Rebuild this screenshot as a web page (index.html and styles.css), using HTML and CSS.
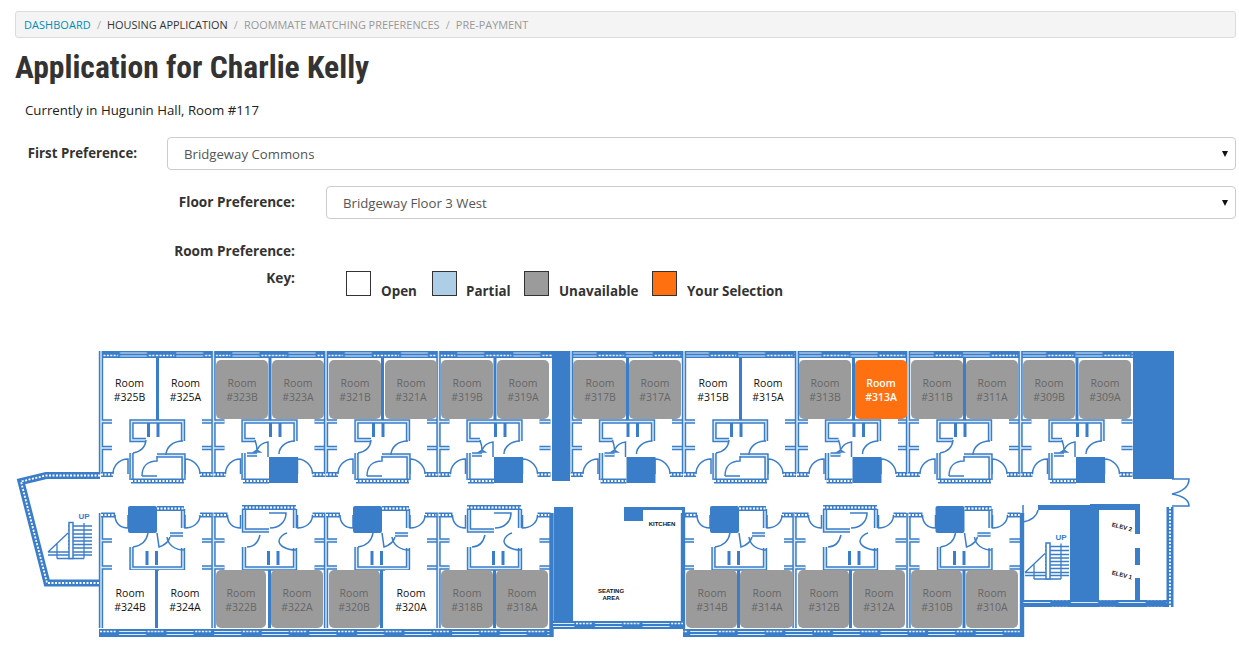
FILE: index.html
```html
<!DOCTYPE html>
<html lang="en">

<head>
    <meta charset="UTF-8">
    <meta name="viewport" content="width=device-width, initial-scale=1.0">
    <title>Housing Application</title>
    <link rel="stylesheet" href="styles.css">
</head>

<body>
    <div class="content">
        <ul class="breadcrumbs">
            <li><a href="#">Dashboard</a></li>
            <li class="current">Housing Application</li>
            <li class="unavailable">Roommate Matching Preferences</li>
            <li class="unavailable">Pre-Payment</li>
        </ul>

        <h1 class="title">Application for Charlie Kelly</h1>
        <p class="current-room">Currently in Hugunin Hall, Room #117</p>

        <div class="pref-row first-row">
            <label class="pref-label label-first" for="firstPref">First Preference:</label>
            <div class="select-wrap">
                <select id="firstPref"><option>Bridgeway Commons</option></select>
            </div>
        </div>

        <div class="pref-row floor-row">
            <label class="pref-label label-sub" for="floorPref">Floor Preference:</label>
            <div class="select-wrap">
                <select id="floorPref"><option>Bridgeway Floor 3 West</option></select>
            </div>
        </div>

        <div class="room-pref"><span class="pref-label label-sub">Room Preference:</span></div>

        <div class="key-row">
            <span class="pref-label label-sub">Key:</span>
            <div class="key-list">
                <div class="key-item key-open"><span class="swatch"></span><b>Open</b></div>
                <div class="key-item key-partial"><span class="swatch"></span><b>Partial</b></div>
                <div class="key-item key-taken"><span class="swatch"></span><b>Unavailable</b></div>
                <div class="key-item key-selected"><span class="swatch"></span><b>Your Selection</b></div>
            </div>
        </div>
    </div>

    <svg class="floor-plan" viewBox="0 340 1239 314" width="1239" height="314">
        <defs>
            <pattern id="wall-top" patternUnits="userSpaceOnUse" x="100" y="351" width="56.2" height="7">
                <rect width="56.2" height="7" fill="#3a7dc9"/>
                <path d="M0 4.5H18" stroke="#fff" stroke-width="1.6" stroke-dasharray="2 1.4"/>
                <path d="M20 2H47M20 5H47" stroke="#dcebf8" stroke-width="1"/>
                <path d="M49 4.5H56" stroke="#fff" stroke-width="1.6" stroke-dasharray="2 1.4"/>
            </pattern>
            <pattern id="wall-bottom" patternUnits="userSpaceOnUse" x="100" y="629" width="47.6" height="8">
                <rect width="47.6" height="8" fill="#3a7dc9"/>
                <path d="M0 2.5H17" stroke="#fff" stroke-width="1.6" stroke-dasharray="2 1.4"/>
                <path d="M19 2.5H46M19 5.5H46" stroke="#dcebf8" stroke-width="1"/>
            </pattern>

            <path id="top-shell-walls" d="M101 351V474M101 421.5H112M101 448H112M202 421.5H213M202 448H213"/>
            <path id="top-shell-hatch" d="M101 474.5H113M200 474.5H213"/>
            <g id="top-shell">
                <use href="#top-shell-walls" class="line-out"/>
                <use href="#top-shell-walls" class="line-in"/>
                <use href="#top-shell-hatch" class="hatch-out"/>
                <use href="#top-shell-hatch" class="hatch-in"/>
                <path class="thin" d="M113 474C113 466 119 459 128 459V474M185 474V459C193 459 200 466 200 474"/>
            </g>

            <path id="a-walls" d="M146 440H131.5V421.5H183V441M131.5 453V480M157 455.5H183.5V480"/>
            <path id="a-hatch" d="M131 481H184"/>
            <g id="suite-a">
                <use href="#top-shell"/>
                <path class="post" d="M157.5 358V420M148.5 423V437M158 423V437"/>
                <use href="#a-walls" class="line-out"/>
                <use href="#a-walls" class="line-in"/>
                <use href="#a-hatch" class="hatch-out"/>
                <use href="#a-hatch" class="hatch-in"/>
                <path class="thin" d="M146 440Q145 451 133 453M183 441C172 441 166 448 166 455M142 476C142 466 148 461 157 461V456M142 476H157"/>
            </g>

            <path id="b-walls" d="M255 440H243.5V421.5H295.5V441M243.5 453V480M247 454.5H257"/>
            <path id="b-hatch" d="M243 481H269"/>
            <g id="suite-b">
                <use href="#top-shell" x="112.5"/>
                <path class="post" d="M270 358V420M270.5 423V437M280 423V437"/>
                <use href="#b-walls" class="line-out"/>
                <use href="#b-walls" class="line-in"/>
                <use href="#b-hatch" class="hatch-out"/>
                <use href="#b-hatch" class="hatch-in"/>
                <rect class="solid" x="269" y="457" width="29" height="26"/>
                <path class="thin" d="M255 440Q257 446 257 450L254 452H260L257 450Q260 443 268 442V457M295 441C286 441 279 447 279 454"/>
            </g>

            <path id="bottom-shell-walls" d="M101 513V628M101 540.5H112M101 567.5H112M202 540.5H213M202 567.5H213"/>
            <path id="bottom-shell-hatch" d="M101 515H115M200 515H213"/>
            <g id="bottom-shell">
                <use href="#bottom-shell-walls" class="line-out"/>
                <use href="#bottom-shell-walls" class="line-in"/>
                <use href="#bottom-shell-hatch" class="hatch-out"/>
                <use href="#bottom-shell-hatch" class="hatch-in"/>
                <path class="thin" d="M115 515C115 523 120 528 128 528V515M185 515V528C193 528 200 523 200 515"/>
            </g>

            <path id="c-walls" d="M131.5 547V568.5H183V548M183 509V528M170 534.5H183"/>
            <path id="c-hatch" d="M157 508.5H184"/>
            <g id="suite-c">
                <use href="#bottom-shell"/>
                <rect class="solid" x="128" y="506" width="29" height="27" rx="2"/>
                <path class="post" d="M156.5 568V628M147 551V565M156.5 551V565"/>
                <use href="#c-walls" class="line-out"/>
                <use href="#c-walls" class="line-in"/>
                <use href="#c-hatch" class="hatch-out"/>
                <use href="#c-hatch" class="hatch-in"/>
                <path class="thin" d="M157 533L159 547Q168 544 170 537M148 533Q146 545 133 547M184 550C175 550 168 545 167 537"/>
            </g>

            <path id="d-walls" d="M244 509V530.5H269M295 509V528M244 547V568.5H295V548"/>
            <path id="d-hatch" d="M242 507.5H296"/>
            <g id="suite-d">
                <use href="#bottom-shell" x="112.5"/>
                <path class="post" d="M269.5 568V628M268.5 551V565M278 551V565"/>
                <use href="#d-walls" class="line-out"/>
                <use href="#d-walls" class="line-in"/>
                <use href="#d-hatch" class="hatch-out"/>
                <use href="#d-hatch" class="hatch-in"/>
                <path class="thin" d="M269 513H286C286 522 279 528 270 528M260 535C258 543 253 547 247 547M296 550C285 550 279 545 279 541C279 538 283 534 287 533"/>
            </g>

            <g id="stairs">
                <path class="stair" d="M68 526H92M68 530H92M68 534H92M68 537.5H92M68 541H92M68 544.5H92M68 548H92M48 552H92M48 555H92M57 558.5H84M68 533L48 552M57 544V558.5M84 523V558.5"/>
                <rect class="stair-post" x="69" y="522.5" width="4" height="36"/>
                <text class="up-label" x="84" y="519">UP</text>
            </g>
        </defs>

        <!-- outer walls -->
        <rect x="99" y="351" width="1034" height="7" fill="url(#wall-top)"/>
        <rect x="99" y="629" width="452" height="8" fill="url(#wall-bottom)"/>
        <rect x="683" y="629" width="340" height="8" fill="url(#wall-bottom)"/>

        <!-- top row suites -->
        <use href="#suite-a"/>
        <use href="#suite-b"/>
        <use href="#suite-a" x="225"/>
        <use href="#suite-b" x="225"/>
        <use href="#suite-b" x="357.5"/>
        <use href="#suite-a" x="583"/>
        <use href="#suite-b" x="583.5"/>
        <use href="#suite-a" x="807"/>
        <use href="#suite-b" x="807"/>

        <!-- bottom row suites -->
        <use href="#suite-c"/>
        <use href="#suite-d"/>
        <use href="#suite-c" x="225"/>
        <use href="#suite-d" x="225"/>
        <use href="#suite-c" x="582"/>
        <use href="#suite-d" x="581"/>
        <use href="#suite-c" x="807.5"/>

        <!-- columns -->
        <rect class="solid" x="552" y="351" width="18" height="130"/>
        <rect class="solid" x="1133" y="351" width="41" height="128"/>
        <path class="line-out" d="M1022 513V637M551.5 513V637"/>

        <!-- west wing -->
        <path class="hatch-out wide" d="M100 475.5H46L21 481.5L47 583H100"/>
        <path class="hatch-in" d="M100 475.5H46L21 481.5L47 583H100"/>
        <use href="#stairs"/>

        <!-- common room -->
        <rect class="solid" x="554" y="507" width="19" height="115"/>
        <rect class="solid" x="624" y="507" width="19" height="14"/>
        <rect class="solid" x="643" y="507" width="39" height="3"/>
        <rect class="solid" x="682" y="507" width="3" height="122"/>
        <rect x="553" y="621" width="130" height="8" fill="url(#wall-bottom)"/>
        <text class="plan-label" x="662" y="526">KITCHEN</text>
        <text class="plan-label" x="611" y="593">SEATING</text>
        <text class="plan-label" x="611" y="600">AREA</text>

        <!-- east wing -->
        <rect class="solid" x="1038" y="505" width="32" height="5"/>
        <rect class="solid" x="1070" y="505" width="29" height="102"/>
        <rect class="solid" x="1090" y="504" width="50" height="6"/>
        <rect class="solid" x="1135" y="510" width="5" height="24"/>
        <rect class="solid" x="1135" y="548" width="5" height="17"/>
        <rect class="solid" x="1135" y="578" width="5" height="24"/>
        <rect x="1023" y="600" width="150" height="7" fill="url(#wall-bottom)"/>
        <path class="hatch-out wide" d="M1170 507V607"/>
        <path class="hatch-in" d="M1170 507V607"/>
        <path class="thin" d="M1023 505V522C1031 521 1037 516 1038 510M1172 479H1189Q1189 490 1172 494Q1189 497 1189 506H1172"/>
        <use href="#stairs" x="977" y="20.5"/>
        <text class="plan-label" transform="rotate(14 1122 527)" x="1122" y="529">ELEV 2</text>
        <text class="plan-label" transform="rotate(14 1122 575)" x="1122" y="577">ELEV 1</text>

        <!-- rooms, top row -->
        <g class="room open"><rect x="104" y="360" width="51" height="59"/><text x="129.5" y="387">Room</text><text x="129.5" y="401">#325B</text></g>
        <g class="room open"><rect x="159" y="360" width="52" height="59"/><text x="185.5" y="387">Room</text><text x="185.5" y="401">#325A</text></g>
        <g class="room taken"><rect x="216" y="360" width="52" height="59" rx="5"/><text x="242" y="387">Room</text><text x="242" y="401">#323B</text></g>
        <g class="room taken"><rect x="272" y="360" width="52" height="59" rx="5"/><text x="298" y="387">Room</text><text x="298" y="401">#323A</text></g>
        <g class="room taken"><rect x="329" y="360" width="52" height="59" rx="5"/><text x="355" y="387">Room</text><text x="355" y="401">#321B</text></g>
        <g class="room taken"><rect x="385" y="360" width="52" height="59" rx="5"/><text x="411" y="387">Room</text><text x="411" y="401">#321A</text></g>
        <g class="room taken"><rect x="441" y="360" width="52" height="59" rx="5"/><text x="467" y="387">Room</text><text x="467" y="401">#319B</text></g>
        <g class="room taken"><rect x="497" y="360" width="52" height="59" rx="5"/><text x="523" y="387">Room</text><text x="523" y="401">#319A</text></g>
        <g class="room taken"><rect x="573" y="360" width="53" height="59" rx="5"/><text x="600" y="387">Room</text><text x="600" y="401">#317B</text></g>
        <g class="room taken"><rect x="629" y="360" width="52" height="59" rx="5"/><text x="655" y="387">Room</text><text x="655" y="401">#317A</text></g>
        <g class="room open"><rect x="687" y="360" width="51" height="59"/><text x="713" y="387">Room</text><text x="713" y="401">#315B</text></g>
        <g class="room open"><rect x="743" y="360" width="51" height="59"/><text x="768" y="387">Room</text><text x="768" y="401">#315A</text></g>
        <g class="room taken"><rect x="799" y="360" width="52" height="59" rx="5"/><text x="825" y="387">Room</text><text x="825" y="401">#313B</text></g>
        <g class="room selected"><rect x="855" y="360" width="52" height="59" rx="5"/><text x="881" y="387">Room</text><text x="881" y="401">#313A</text></g>
        <g class="room taken"><rect x="911" y="360" width="52" height="59" rx="5"/><text x="937" y="387">Room</text><text x="937" y="401">#311B</text></g>
        <g class="room taken"><rect x="966" y="360" width="52" height="59" rx="5"/><text x="992" y="387">Room</text><text x="992" y="401">#311A</text></g>
        <g class="room taken"><rect x="1023" y="360" width="52" height="59" rx="5"/><text x="1049" y="387">Room</text><text x="1049" y="401">#309B</text></g>
        <g class="room taken"><rect x="1079" y="360" width="52" height="59" rx="5"/><text x="1105" y="387">Room</text><text x="1105" y="401">#309A</text></g>

        <!-- rooms, bottom row -->
        <g class="room open"><rect x="104" y="570" width="51" height="58"/><text x="130" y="597">Room</text><text x="130" y="611">#324B</text></g>
        <g class="room open"><rect x="159" y="570" width="52" height="58"/><text x="185" y="597">Room</text><text x="185" y="611">#324A</text></g>
        <g class="room taken"><rect x="216" y="570" width="50" height="58" rx="5"/><text x="241" y="597">Room</text><text x="241" y="611">#322B</text></g>
        <g class="room taken"><rect x="271" y="570" width="52" height="58" rx="5"/><text x="297" y="597">Room</text><text x="297" y="611">#322A</text></g>
        <g class="room taken"><rect x="329" y="570" width="51" height="58" rx="5"/><text x="354" y="597">Room</text><text x="354" y="611">#320B</text></g>
        <g class="room open"><rect x="385" y="570" width="51" height="58"/><text x="411" y="597">Room</text><text x="411" y="611">#320A</text></g>
        <g class="room taken"><rect x="441" y="570" width="52" height="58" rx="5"/><text x="467" y="597">Room</text><text x="467" y="611">#318B</text></g>
        <g class="room taken"><rect x="496" y="570" width="52" height="58" rx="5"/><text x="522" y="597">Room</text><text x="522" y="611">#318A</text></g>
        <g class="room taken"><rect x="686" y="570" width="51" height="58" rx="5"/><text x="712" y="597">Room</text><text x="712" y="611">#314B</text></g>
        <g class="room taken"><rect x="740" y="570" width="53" height="58" rx="5"/><text x="767" y="597">Room</text><text x="767" y="611">#314A</text></g>
        <g class="room taken"><rect x="798" y="570" width="51" height="58" rx="5"/><text x="824" y="597">Room</text><text x="824" y="611">#312B</text></g>
        <g class="room taken"><rect x="853" y="570" width="52" height="58" rx="5"/><text x="879" y="597">Room</text><text x="879" y="611">#312A</text></g>
        <g class="room taken"><rect x="911" y="570" width="51" height="58" rx="5"/><text x="937" y="597">Room</text><text x="937" y="611">#310B</text></g>
        <g class="room taken"><rect x="966" y="570" width="52" height="58" rx="5"/><text x="992" y="597">Room</text><text x="992" y="611">#310A</text></g>
    </svg>
</body>

</html>
```

FILE: styles.css
```css
* {
    box-sizing: border-box;
}

body {
    font-family: "Open Sans", Arial, sans-serif;
    margin: 0;
    padding: 0;
    background-color: white;
    color: #222;
    height: 654px;
    overflow: hidden;
}

.content {
    padding: 11px 3px 0 15px;
    height: 340px;
}

.breadcrumbs {
    display: flex;
    align-items: center;
    height: 27px;
    margin: 0;
    padding: 0 8px;
    list-style: none;
    background-color: #f4f4f4;
    border: 1px solid #dcdcdc;
    border-radius: 3px;
    font-size: 10.9px;
    text-transform: uppercase;
}

.breadcrumbs li + li::before {
    content: "/";
    margin: 0 6.2px;
    color: #aaa;
}

.breadcrumbs a {
    color: #008cba;
    text-decoration: none;
    letter-spacing: 0.1px;
}

.breadcrumbs .current {
    color: #333;
}

.breadcrumbs .unavailable {
    color: #999;
}

.title {
    margin: 9px 0 0;
    font-family: Roboto, Arial, sans-serif;
    font-size: 31.6px;
    font-weight: 700;
    font-stretch: condensed;
    line-height: 42px;
    color: #333;
    white-space: nowrap;
}

.current-room {
    margin: 12px 0 0 10px;
    font-size: 13.25px;
    line-height: 18px;
    color: #222;
}

.pref-row {
    display: flex;
    align-items: center;
}

.first-row {
    margin-top: 18px;
    gap: 30px;
}

.floor-row {
    margin-top: 16px;
    gap: 31px;
}

.pref-label {
    display: block;
    font-size: 13.25px;
    font-weight: 700;
    line-height: 18px;
    color: #333;
    text-align: right;
}

.label-first {
    width: 122px;
    flex: none;
    margin-top: -1px;
}

.label-sub {
    width: 280px;
    flex: none;
    font-size: 13.6px;
}

.floor-row .label-sub {
    margin-top: -1px;
}

.select-wrap {
    position: relative;
    flex: 1;
}

.select-wrap::after {
    content: "";
    position: absolute;
    right: 8px;
    top: 14px;
    border-left: 3px solid transparent;
    border-right: 3px solid transparent;
    border-top: 6px solid #111;
}

select {
    display: block;
    width: 100%;
    height: 33px;
    padding: 0 16px;
    appearance: none;
    background-color: white;
    border: 1px solid #ccc;
    border-radius: 4px;
    font-family: "Open Sans", Arial, sans-serif;
    font-size: 13.2px;
    color: #555;
}

.room-pref {
    margin-top: 23px;
}

.key-row {
    display: flex;
    align-items: flex-start;
    gap: 51px;
    margin-top: 9px;
}

.key-list {
    display: flex;
    margin-top: 2px;
}

.key-item {
    display: flex;
    align-items: flex-end;
    font-size: 13.4px;
    line-height: 18px;
    color: #333;
}

.key-item b {
    margin-left: 10px;
    position: relative;
    top: 4px;
}

.key-open {
    width: 86px;
}

.key-partial {
    width: 92px;
}

.key-partial b {
    margin-left: 9px;
}

.key-taken {
    width: 128px;
}

.swatch {
    display: block;
    width: 25px;
    height: 25px;
    flex: none;
    border: 1px solid #333;
}

.key-partial .swatch {
    background-color: #aecde6;
}

.key-taken .swatch {
    background-color: #9b9b9b;
}

.key-selected .swatch {
    background-color: #ff7010;
}

.floor-plan {
    display: block;
}

.solid {
    fill: #3a7dc9;
}

.line-out {
    fill: none;
    stroke: #3a7dc9;
    stroke-width: 4.4;
}

.line-in {
    fill: none;
    stroke: #dcebf8;
    stroke-width: 1.4;
}

.hatch-out {
    fill: none;
    stroke: #3a7dc9;
    stroke-width: 5;
}

.hatch-out.wide {
    stroke-width: 7;
}

.hatch-in {
    fill: none;
    stroke: white;
    stroke-width: 1.8;
    stroke-dasharray: 2 1.5;
}

.thin {
    fill: none;
    stroke: #3a7dc9;
    stroke-width: 1.5;
}

.post {
    fill: none;
    stroke: #3a7dc9;
    stroke-width: 3;
}

.stair {
    fill: none;
    stroke: #3a7dc9;
    stroke-width: 1.3;
}

.stair-post {
    fill: white;
    stroke: #3a7dc9;
    stroke-width: 1.5;
}

.up-label {
    font-family: "Liberation Sans", Arial, sans-serif;
    font-size: 8px;
    font-weight: 700;
    fill: #3a7dc9;
    text-anchor: middle;
}

.plan-label {
    font-family: "Liberation Sans", Arial, sans-serif;
    font-size: 6px;
    font-weight: 700;
    fill: #111;
    text-anchor: middle;
}

.room text {
    font-family: "Open Sans", Arial, sans-serif;
    font-size: 10.5px;
    text-anchor: middle;
}

.room.open rect {
    fill: white;
}

.room.open text {
    fill: #111;
}

.room.taken rect {
    fill: #9b9b9b;
}

.room.taken text {
    fill: #666;
}

.room.selected rect {
    fill: #ff7010;
}

.room.selected text {
    fill: white;
    font-weight: 600;
}
```
